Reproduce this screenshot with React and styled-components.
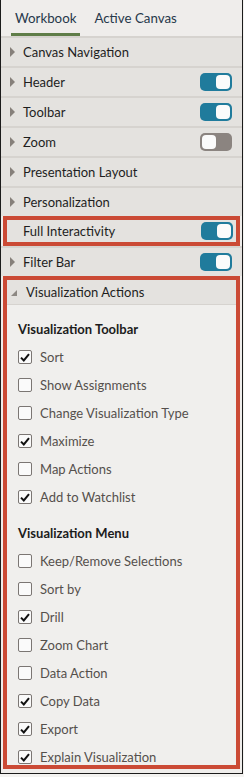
import React from 'react';
import styled, { createGlobalStyle } from 'styled-components';

const GlobalStyle = createGlobalStyle`
  html, body {
    margin: 0;
    padding: 0;
    background: #f4f3f1;
  }
  * {
    box-sizing: border-box;
  }
`;

const Panel = styled.div`
  width: 243px;
  height: 774px;
  border: 1px solid #1b1b1b;
  border-top: none;
  background: #efedeb;
  font-family: Lato, "Open Sans", sans-serif;
  font-size: 13px;
  color: #1e1e1e;
  display: flex;
  flex-direction: column;
  overflow: hidden;
`;

const Tabs = styled.div`
  height: 36px;
  display: flex;
  align-items: stretch;
  gap: 10px;
  padding: 0 10px;
  background: #efedeb;
`;

const Tab = styled.div`
  display: flex;
  align-items: center;
  padding: 2px 4px 0;
  color: #26384a;
  font-size: 13.3px;
  border-bottom: 3px solid ${(p) => (p.active ? '#5f7d48' : 'transparent')};
`;

const Row = styled.div`
  height: 30px;
  display: flex;
  align-items: center;
  padding: 0 10px 0 9px;
  background: #e4e2df;
  border-top: 2px solid #d6d3cf;
`;

const Arrow = styled.span`
  width: 0;
  height: 0;
  border-top: 5px solid transparent;
  border-bottom: 5px solid transparent;
  border-left: 5px solid #86807b;
  margin-right: 8px;
`;

const Label = styled.span`
  flex: 1;
`;

const Outline = styled.div`
  margin: 0 2px;
  border: 4px solid #cb4a35;
  display: flex;
  flex-direction: column;
`;

const FlatRow = styled.div`
  height: 22px;
  display: flex;
  align-items: center;
  padding: 0 3px 0 16px;
  background: #e4e2df;
`;

const Toggle = styled.span`
  width: 32px;
  height: 18px;
  border-radius: 5px;
  background: ${(p) => (p.on ? '#207b9c' : '#8b8480')};
  display: flex;
  align-items: center;
  justify-content: ${(p) => (p.on ? 'flex-end' : 'flex-start')};
  padding: 0 2px;
  &::after {
    content: '';
    width: 14px;
    height: 14px;
    border-radius: 4px;
    background: #fbfbfb;
  }
`;

const Actions = styled(Outline)`
  flex: 1;
  margin-bottom: 4px;
  overflow: hidden;
`;

const ActionsHead = styled.div`
  height: 25px;
  flex: none;
  display: flex;
  align-items: center;
  padding: 0 0 1px 4px;
  background: #e4e2df;
  border-bottom: 1px solid #d6d3cf;
`;

const Corner = styled.span`
  width: 0;
  height: 0;
  border-left: 6px solid transparent;
  border-bottom: 6px solid #8d8883;
  margin: 3px 9px 0 0;
`;

const Body = styled.div`
  flex: 1;
  background: #f0efed;
  padding: 10px 0 0 11px;
  display: flex;
  flex-direction: column;
`;

const Heading = styled.div`
  height: 28px;
  display: flex;
  align-items: center;
  font-weight: 700;
  color: #1c1c1c;
  margin-top: ${(p) => (p.gap ? '8px' : '0')};
`;

const Item = styled.div`
  height: 28px;
  flex: none;
  display: flex;
  align-items: center;
  gap: 8px;
  color: #55504c;
`;

const Box = styled.span`
  width: 14px;
  height: 14px;
  border: 1px solid #7b7673;
  border-radius: 2px;
  background: #fafafa;
  display: flex;
  align-items: center;
  justify-content: center;
`;

const Check = () => (
  <svg width="10" height="9" viewBox="0 0 10 9">
    <path d="M1 4.6 L3.8 7.4 L9 1.2" fill="none" stroke="#111" strokeWidth="2" />
  </svg>
);

const CheckItem = ({ checked, children }) => (
  <Item>
    <Box>{checked && <Check />}</Box>
    {children}
  </Item>
);

const sections = [
  { label: 'Canvas Navigation' },
  { label: 'Header', toggle: true },
  { label: 'Toolbar', toggle: true },
  { label: 'Zoom', toggle: false },
  { label: 'Presentation Layout' },
  { label: 'Personalization' },
];

const toolbarItems = [
  ['Sort', true],
  ['Show Assignments', false],
  ['Change Visualization Type', false],
  ['Maximize', true],
  ['Map Actions', false],
  ['Add to Watchlist', true],
];

const menuItems = [
  ['Keep/Remove Selections', false],
  ['Sort by', false],
  ['Drill', true],
  ['Zoom Chart', false],
  ['Data Action', false],
  ['Copy Data', true],
  ['Export', true],
  ['Explain Visualization', true],
];

export default function App() {
  return (
    <>
      <GlobalStyle />
      <Panel>
        <Tabs>
          <Tab active>Workbook</Tab>
          <Tab>Active Canvas</Tab>
        </Tabs>
        {sections.map((s) => (
          <Row key={s.label}>
            <Arrow />
            <Label>{s.label}</Label>
            {s.toggle !== undefined && <Toggle on={s.toggle} />}
          </Row>
        ))}
        <Outline>
          <FlatRow>
            <Label>Full Interactivity</Label>
            <Toggle on />
          </FlatRow>
        </Outline>
        <Row>
          <Arrow />
          <Label>Filter Bar</Label>
          <Toggle on />
        </Row>
        <Actions>
          <ActionsHead>
            <Corner />
            <Label>Visualization Actions</Label>
          </ActionsHead>
          <Body>
            <Heading>Visualization Toolbar</Heading>
            {toolbarItems.map(([t, c]) => (
              <CheckItem key={t} checked={c}>{t}</CheckItem>
            ))}
            <Heading gap>Visualization Menu</Heading>
            {menuItems.map(([t, c]) => (
              <CheckItem key={t} checked={c}>{t}</CheckItem>
            ))}
          </Body>
        </Actions>
      </Panel>
    </>
  );
}
